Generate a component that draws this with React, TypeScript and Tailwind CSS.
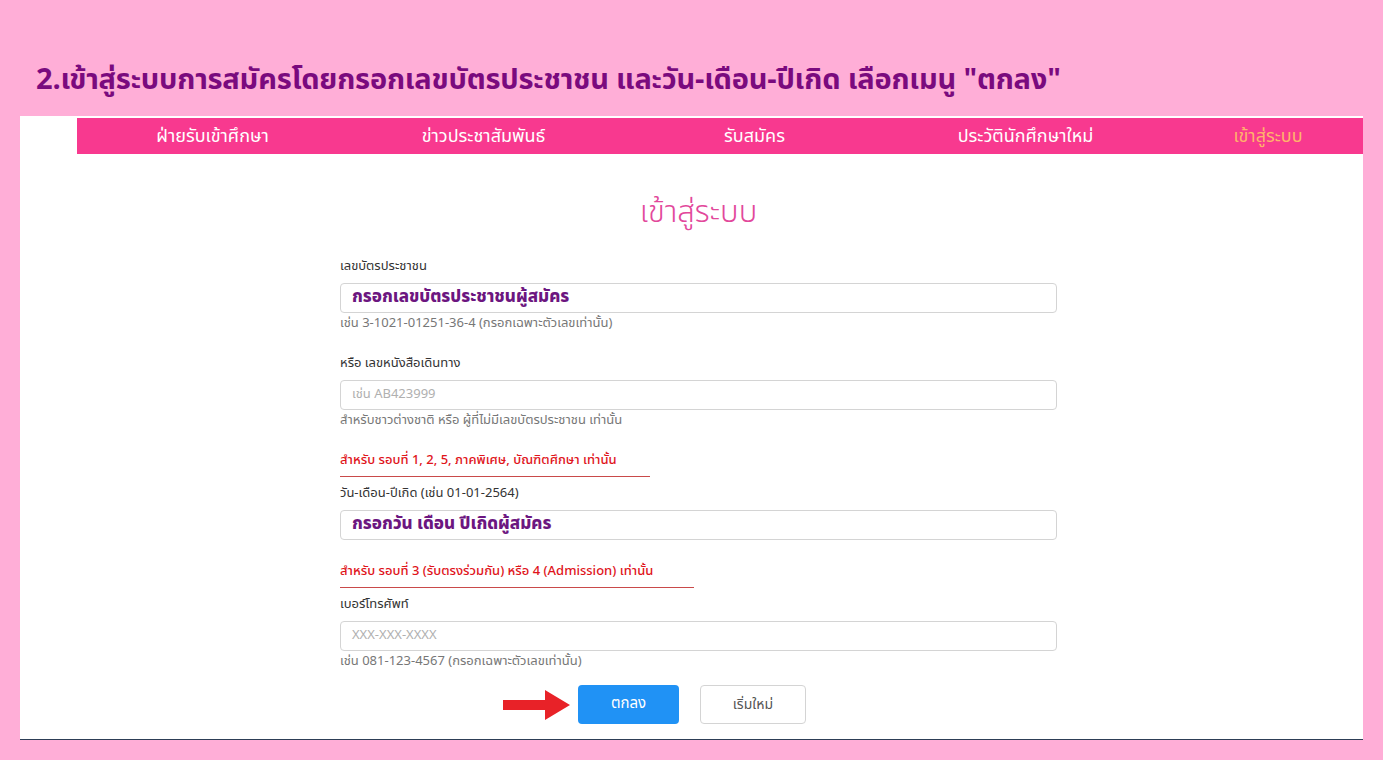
const thai = "font-['Noto_Sans_Thai','Noto_Sans','DejaVu_Sans',sans-serif]";

const menu = [
  { label: "ฝ่ายรับเข้าศึกษา", active: false },
  { label: "ข่าวประชาสัมพันธ์", active: false },
  { label: "รับสมัคร", active: false },
  { label: "ประวัตินักศึกษาใหม่", active: false },
  { label: "เข้าสู่ระบบ", active: true },
];

function Field({
  label,
  value,
  placeholder,
  help,
}: {
  label: string;
  value?: string;
  placeholder?: string;
  help?: string;
}) {
  return (
    <div>
      <div className="h-[20px] text-[13px] leading-[20px] text-[#333]">{label}</div>
      <div className="mt-[7px] flex h-[30px] items-center rounded-[4px] border border-[#d4d4d4] bg-white px-[11px]">
        {value ? (
          <span className="text-[17px] font-extrabold text-[#6c1680]">{value}</span>
        ) : (
          <span className="text-[13px] text-[#b0b0b0]">{placeholder}</span>
        )}
      </div>
      {help && <div className="mt-[1px] h-[18px] text-[13px] leading-[18px] text-[#777]">{help}</div>}
    </div>
  );
}

function Notice({ text, width }: { text: string; width: string }) {
  return (
    <div className={`${width} border-b border-[#c94a4a] pb-[6px]`}>
      <div className="h-[20px] text-[13px] font-medium leading-[20px] text-[#e0141b]">{text}</div>
    </div>
  );
}

export default function App() {
  return (
    <div className={`h-[760px] w-[1383px] overflow-hidden bg-[#ffaed7] ${thai}`}>
      <h1 className="ml-[36px] pt-[60px] text-[29px] font-bold leading-[40px] tracking-[-0.2px] text-[#7a0a7e]">
        2.เข้าสู่ระบบการสมัครโดยกรอกเลขบัตรประชาชน และวัน-เดือน-ปีเกิด เลือกเมนู "ตกลง"
      </h1>

      <div className="ml-[20px] mt-[16px] h-[624px] w-[1343px] border-b border-[#2d3e56] bg-white pt-[2px]">
        <nav className="ml-[57px] grid h-[36px] grid-cols-[271px_271px_271px_271px_1fr] items-center bg-[#f8398f] text-[18px]">
          {menu.map((item) => (
            <div
              key={item.label}
              className={`text-center ${item.active ? "pl-[12px] text-[#ffb36b]" : "text-white"}`}
            >
              {item.label}
            </div>
          ))}
        </nav>

        <div className="ml-[320px] w-[717px]">
          <h2 className="mt-[36px] h-[45px] text-center text-[31px] font-light leading-[45px] text-[#e2489b]">
            เข้าสู่ระบบ
          </h2>

          <div className="mt-[21px]">
            <Field
              label="เลขบัตรประชาชน"
              value="กรอกเลขบัตรประชาชนผู้สมัคร"
              help="เช่น 3-1021-01251-36-4 (กรอกเฉพาะตัวเลขเท่านั้น)"
            />
          </div>

          <div className="mt-[21px]">
            <Field
              label="หรือ เลขหนังสือเดินทาง"
              placeholder="เช่น AB423999"
              help="สำหรับชาวต่างชาติ หรือ ผู้ที่ไม่มีเลขบัตรประชาชน เท่านั้น"
            />
          </div>

          <div className="mt-[21px]">
            <Notice text="สำหรับ รอบที่ 1, 2, 5, ภาคพิเศษ, บัณฑิตศึกษา เท่านั้น" width="w-[310px]" />
          </div>

          <div className="mt-[6px]">
            <Field label="วัน-เดือน-ปีเกิด (เช่น 01-01-2564)" value="กรอกวัน เดือน ปีเกิดผู้สมัคร" />
          </div>

          <div className="mt-[21px]">
            <Notice
              text="สำหรับ รอบที่ 3 (รับตรงร่วมกัน) หรือ 4 (Admission) เท่านั้น"
              width="w-[354px]"
            />
          </div>

          <div className="mt-[6px]">
            <Field
              label="เบอร์โทรศัพท์"
              placeholder="XXX-XXX-XXXX"
              help="เช่น 081-123-4567 (กรอกเฉพาะตัวเลขเท่านั้น)"
            />
          </div>

          <div className="mt-[15px] flex items-center">
            <svg width="68" height="32" viewBox="0 0 68 32" className="ml-[163px]">
              <polygon points="0,11 42,11 42,1 67,16 42,31 42,21 0,21" fill="#e82228" />
            </svg>
            <button className="ml-[7px] h-[39px] w-[101px] rounded-[4px] bg-[#2092f5] text-[15px] text-white">
              ตกลง
            </button>
            <button className="ml-[21px] h-[39px] w-[106px] rounded-[4px] border border-[#d4d4d4] bg-white text-[14px] text-[#555]">
              เริ่มใหม่
            </button>
          </div>
        </div>
      </div>
    </div>
  );
}
